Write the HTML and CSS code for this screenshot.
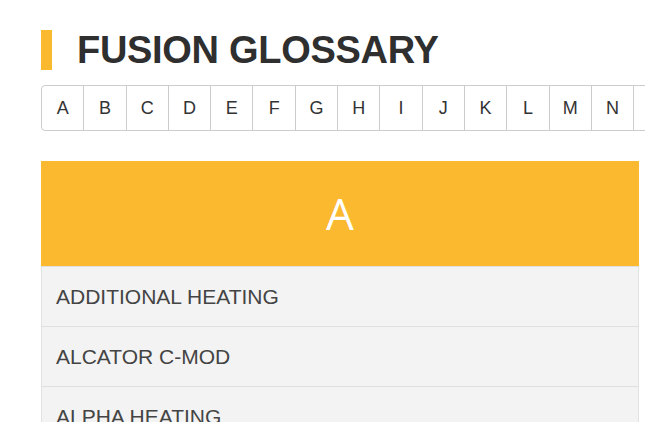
FILE: index.html
```html
<!DOCTYPE html>
<html lang="en">
<head>
    <meta charset="UTF-8">
    <title>Fusion Glossary</title>
    <link rel="stylesheet" href="styles.css">
</head>
<body>
<div class="glossary">
    <h1 class="title">FUSION GLOSSARY</h1>
    <ul class="letters">
        <li class="letter">A</li>
        <li class="letter">B</li>
        <li class="letter">C</li>
        <li class="letter">D</li>
        <li class="letter">E</li>
        <li class="letter">F</li>
        <li class="letter">G</li>
        <li class="letter">H</li>
        <li class="letter">I</li>
        <li class="letter">J</li>
        <li class="letter">K</li>
        <li class="letter">L</li>
        <li class="letter">M</li>
        <li class="letter">N</li>
        <li class="letter">O</li>
        <li class="letter">P</li>
    </ul>
    <div class="section">
        <div class="section-head">A</div>
        <ul class="terms">
            <li class="term">ADDITIONAL HEATING</li>
            <li class="term">ALCATOR C-MOD</li>
            <li class="term">ALPHA HEATING</li>
            <li class="term">ALPHA PARTICLE</li>
        </ul>
    </div>
</div>
</body>
</html>
```

FILE: styles.css
```css
* {
    padding: 0;
    margin: 0;
    box-sizing: border-box;
}

ul {
    list-style: none;
}

body {
    font-family: "Liberation Sans", Arial, sans-serif;
    color: #333;
    background: #fff;
    overflow: hidden;
}

.glossary {
    width: 598px;
    margin-left: 41px;
    padding-top: 30px;
}

.glossary .title {
    display: flex;
    align-items: center;
    gap: 25px;
    height: 40px;
    font-size: 38px;
    font-weight: bold;
    letter-spacing: -0.3px;
    color: #2f2f2f;
}

.glossary .title::before {
    content: "";
    width: 11px;
    height: 40px;
    background-color: #fbb930;
}

.glossary .letters {
    display: flex;
    margin-top: 15px;
    width: max-content;
    border: 1px solid #ccc;
    border-radius: 4px;
}

.glossary .letters .letter {
    width: 42.3px;
    height: 44px;
    line-height: 44px;
    text-align: center;
    font-size: 18px;
    color: #333;
    border-left: 1px solid #ccc;
}

.glossary .letters .letter:first-child {
    width: 41.3px;
    border-left: 0;
}

.section {
    margin-top: 30px;
    border: 1px solid #e2e2e2;
    border-top: 0;
}

.section .section-head {
    height: 105px;
    line-height: 105px;
    text-align: center;
    font-family: "Open Sans", sans-serif;
    font-size: 44px;
    color: #fff;
    background-color: #fbb930;
    margin: 0 -1px;
}

.section .terms .term {
    height: 60px;
    line-height: 60px;
    padding-left: 14px;
    font-size: 21px;
    color: #444;
    background-color: #f3f3f3;
    border-top: 1px solid #e0e0e0;
}
```
